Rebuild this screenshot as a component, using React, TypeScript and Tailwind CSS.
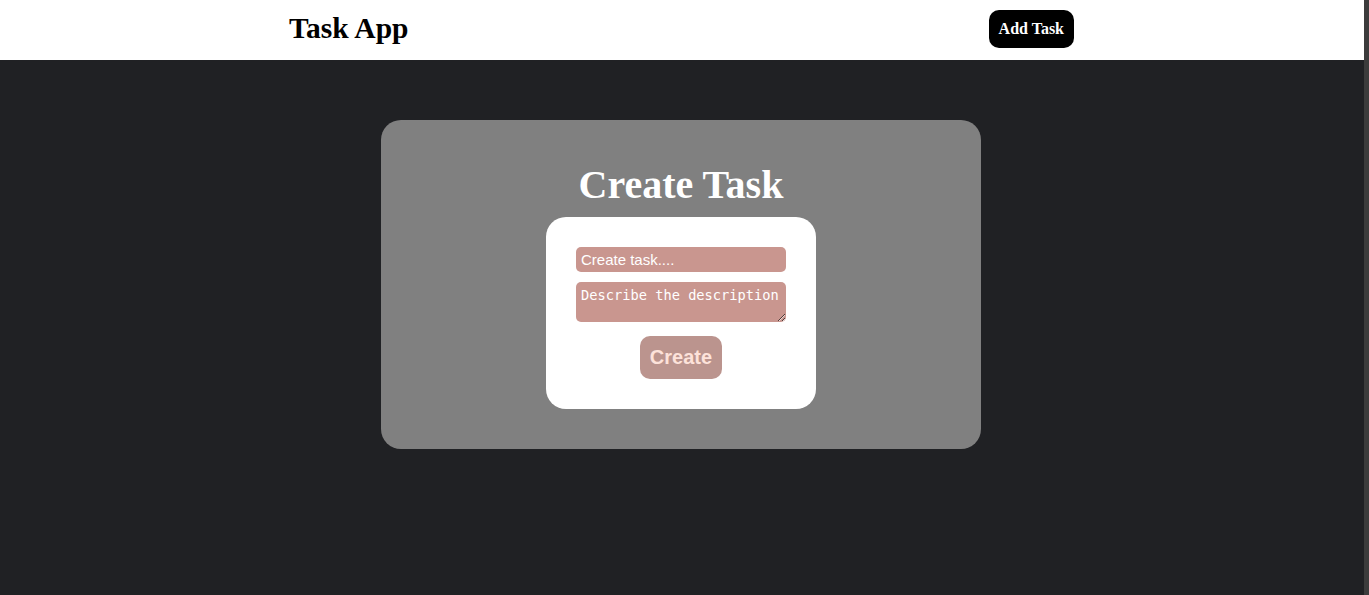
import React from "react";

export default function App() {
  return (
    <div className="flex h-[595px] w-full overflow-hidden">
      <div className="flex flex-1 flex-col bg-[#202124]">
        <header className="h-[60px] bg-white pr-[1px]">
          <div className="mx-auto flex h-full w-[785px] items-center justify-between pb-[2px]">
            <h1 className="-mt-[1px] font-['Liberation_Serif',serif] text-[29.5px] font-bold leading-none text-black">
              Task App
            </h1>
            <button className="h-[38px] rounded-[10px] bg-black px-[10px] font-['Liberation_Serif',serif] text-[16px] font-bold text-white">
              Add Task
            </button>
          </div>
        </header>
        <main className="flex justify-center pr-[2px] pt-[60px]">
          <div className="flex w-[600px] flex-col items-center rounded-[20px] bg-[#808080] pb-[40px] pt-[42px]">
            <h2 className="h-[48px] font-['Liberation_Serif',serif] text-[40px] font-bold leading-[46px] text-white">
              Create Task
            </h2>
            <div className="mt-[7px] flex w-[270px] flex-col items-center rounded-[20px] bg-white p-[30px]">
              <input
                placeholder="Create task...."
                className="h-[25px] w-[210px] rounded-[5px] bg-[#c9968f] px-[5px] font-['Liberation_Sans',sans-serif] text-[15px] text-white outline-none placeholder:text-white"
              />
              <textarea
                placeholder="Describe the description"
                className="mt-[10px] block h-[40px] w-[210px] rounded-[5px] bg-[#c9968f] px-[5px] py-[6px] font-['DejaVu_Sans_Mono',monospace] text-[13.7px] leading-[15px] text-white outline-none placeholder:text-white"
              />
              <button className="mt-[14px] h-[43px] w-[82px] rounded-[10px] bg-[#bb948e] pb-[2px] font-['Liberation_Sans',sans-serif] text-[20px] font-bold text-[#fde2da]">
                Create
              </button>
            </div>
          </div>
        </main>
      </div>
      <div className="w-[5px] bg-[#3c3c3c]" />
    </div>
  );
}
